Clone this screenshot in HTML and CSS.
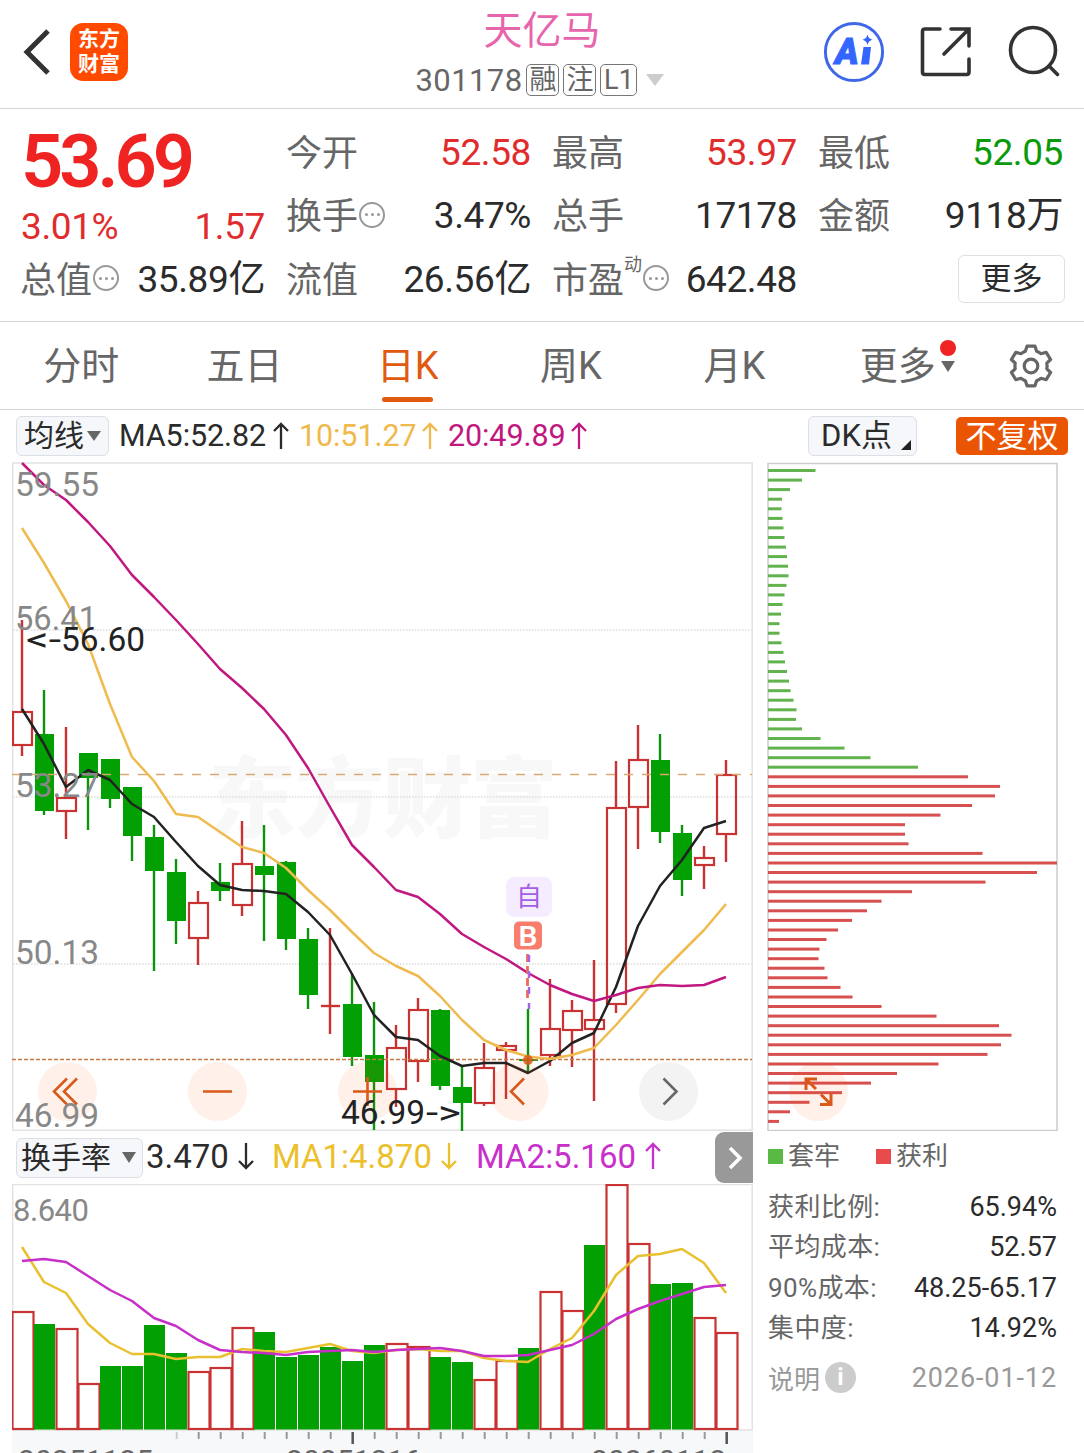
FILE: index.html
```html
<!DOCTYPE html>
<html lang="zh-CN">
<head>
    <meta charset="UTF-8">
    <meta name="viewport" content="width=device-width, initial-scale=1.0">
    <title>天亿马 301178</title>
    <link rel="stylesheet" href="styles.css">
</head>
<body>

    <!-- 顶部导航 -->
    <header class="top-bar">
        <div class="top-left">
            <svg class="back" width="28" height="48" viewBox="0 0 28 48"><path d="M26 3L5 24L26 45"/></svg>
            <div class="logo"><span>东方</span><span>财富</span></div>
        </div>
        <div class="top-title">
            <h1>天亿马</h1>
            <div class="code-row">
                <span class="code">301178</span>
                <span class="tag">融</span>
                <span class="tag">注</span>
                <span class="tag tag-l1">L1</span>
                <i class="caret"></i>
            </div>
        </div>
        <div class="top-right">
            <svg width="62" height="62" viewBox="0 0 62 62">
                <circle cx="31" cy="31" r="28.600" fill="none" stroke="#3f68e8" stroke-width="3"/>
                <text class="ai-text" x="12" y="43">A</text>
                <path d="M40.500 26h7.500l-2 17.500h-8z" fill="#3366ff"/>
                <path d="M44.500 13.500q1 4.500 5 5.200q-4 .8-5 5.300q-1-4.500-5-5.300q4-.7 5-5.200z" fill="#3366ff"/>
            </svg>
            <svg class="line-icon" width="52" height="52" viewBox="0 0 52 52">
                <path d="M20 3H5Q2.500 3 2.500 5.500V46Q2.500 48.500 5 48.500H46.500Q49 48.500 49 46V33M31 3H49V20M48 4L24 28"/>
            </svg>
            <svg class="line-icon" width="54" height="54" viewBox="0 0 54 54">
                <circle cx="26" cy="25" r="22.500"/><path d="M42 41L50.500 49.500"/>
            </svg>
        </div>
    </header>

    <!-- 行情数据 -->
    <section class="quote">
        <div class="quote-main">
            <div class="price">53.69</div>
            <div class="item red"><span>3.01%</span><span>1.57</span></div>
        </div>
        <div class="item"><label>今开</label><b class="red">52.58</b></div>
        <div class="item"><label>最高</label><b class="red">53.97</b></div>
        <div class="item"><label>最低</label><b class="green">52.05</b></div>
        <div class="item"><label>换手<i class="dots"></i></label><b>3.47%</b></div>
        <div class="item"><label>总手</label><b>17178</b></div>
        <div class="item"><label>金额</label><b>9118万</b></div>
        <div class="item"><label>总值<i class="dots"></i></label><b>35.89亿</b></div>
        <div class="item"><label>流值</label><b>26.56亿</b></div>
        <div class="item"><label>市盈<sup>动</sup><i class="dots"></i></label><b>642.48</b></div>
        <button class="more-btn">更多</button>
    </section>

    <!-- 周期切换 -->
    <nav class="tabs">
        <a>分时</a>
        <a>五日</a>
        <a class="active">日K</a>
        <a>周K</a>
        <a>月K</a>
        <a class="tab-more">更多<i class="red-dot"></i><i class="small-caret"></i></a>
        <svg class="gear" width="46" height="46" viewBox="-23 -23 46 46">
            <path d="M-4 -19.800H4L5.600 -14.800Q8.200 -13.700 10 -12.300L15.200 -13.700L19.600 -6.500L15.800 -2.800Q16.300 0 15.800 2.800L19.600 6.500L15.200 13.700L10 12.300Q8.200 13.700 5.600 14.800L4 19.800H-4L-5.600 14.800Q-8.200 13.700 -10 12.300L-15.200 13.700L-19.600 6.500L-15.800 2.800Q-16.300 0 -15.800 -2.800L-19.600 -6.500L-15.200 -13.700L-10 -12.300Q-8.200 -13.700 -5.600 -14.800Z"/>
            <circle r="6.800"/>
        </svg>
    </nav>

    <!-- 均线 -->
    <div class="ma-bar">
        <button class="select-btn">均线<i class="small-caret"></i></button>
        <span class="ma ma5">MA5:52.82<svg class="arrow" viewBox="0 0 18 28"><path d="M9 27V2M2 9L9 2L16 9"/></svg></span>
        <span class="ma ma10">10:51.27<svg class="arrow" viewBox="0 0 18 28"><path d="M9 27V2M2 9L9 2L16 9"/></svg></span>
        <span class="ma ma20">20:49.89<svg class="arrow" viewBox="0 0 18 28"><path d="M9 27V2M2 9L9 2L16 9"/></svg></span>
        <button class="select-btn dk-btn">DK点<i class="corner"></i></button>
        <button class="fq-btn">不复权</button>
    </div>

    <main class="charts">
        <div class="left">
            <svg id="kline" width="741" height="669" viewBox="12 462 741 669"></svg>
            <div class="ind-bar">
                <button class="select-btn">换手率<i class="small-caret"></i></button>
                <span class="ind">3.470<svg class="arrow" viewBox="0 0 18 28"><path d="M9 1V26M2 19L9 26L16 19"/></svg></span>
                <span class="ind ind-ma1">MA1:4.870<svg class="arrow" viewBox="0 0 18 28"><path d="M9 1V26M2 19L9 26L16 19"/></svg></span>
                <span class="ind ind-ma2">MA2:5.160<svg class="arrow" viewBox="0 0 18 28"><path d="M9 27V2M2 9L9 2L16 9"/></svg></span>
                <button class="next-btn"><svg width="16" height="26" viewBox="0 0 16 26"><path d="M3 3L13 13L3 23"/></svg></button>
            </div>
            <svg id="volume" width="741" height="269" viewBox="12 1184 741 269"></svg>
        </div>

        <!-- 筹码分布 -->
        <aside class="right">
            <svg id="chips" width="292" height="669" viewBox="767 462 292 669"></svg>
            <div class="legend">
                <span><i class="box box-green"></i>套牢</span>
                <span><i class="box box-red"></i>获利</span>
            </div>
            <dl class="stats">
                <dt>获利比例:</dt><dd>65.94%</dd>
                <dt>平均成本:</dt><dd>52.57</dd>
                <dt>90%成本:</dt><dd>48.25-65.17</dd>
                <dt>集中度:</dt><dd>14.92%</dd>
            </dl>
            <div class="note">
                <span>说明<i class="info">i</i></span>
                <span class="date">2026-01-12</span>
            </div>
        </aside>
    </main>

    <script src="script.js"></script>
</body>
</html>
```
FILE: styles.css
```css
* {
    box-sizing: border-box;
}

body {
    margin: 0;
    width: 1084px;
    height: 1453px;
    overflow: hidden;
    background: #fff;
    color: #2b2b2b;
    font-family: Roboto, "Noto Sans CJK SC", sans-serif;
}

button {
    font-family: inherit;
    padding: 0;
    color: inherit;
}

i {
    font-style: normal;
}

.red { color: #e02c2c; }
.green { color: #0c9a0c; }

/* 顶部导航 */
.top-bar {
    display: grid;
    grid-template-columns: 1fr 260px 1fr;
    height: 109px;
    border-bottom: 1px solid #d6d6d6;
}

.top-left {
    display: flex;
    align-items: center;
    height: 103px;
    padding-left: 22px;
    gap: 20px;
}

.back path {
    fill: none;
    stroke: #333;
    stroke-width: 5;
}

.logo {
    display: flex;
    flex-direction: column;
    align-items: center;
    justify-content: center;
    width: 58px;
    height: 58px;
    border-radius: 13px;
    background: #ff4a00;
    color: #fff;
    font-size: 21px;
    font-weight: 700;
    line-height: 25px;
}

.top-title {
    text-align: center;
}

.top-title h1 {
    margin: 0;
    padding-top: 3px;
    font-size: 39px;
    font-weight: 400;
    line-height: 56px;
    color: #e765ac;
}

.code-row {
    display: flex;
    align-items: center;
    justify-content: center;
    height: 42px;
    margin-left: -4px;
    gap: 4px;
    color: #666;
}

.code {
    font-size: 31px;
    letter-spacing: 0.4px;
}

.tag {
    width: 33px;
    height: 32px;
    border: 1px solid #777;
    border-radius: 5px;
    font-size: 27px;
    line-height: 30px;
    text-align: center;
}

.tag-l1 {
    width: 37px;
}

.caret {
    margin-left: 5px;
    border: 9px solid transparent;
    border-top: 12px solid #ccc;
    border-bottom: 0;
}

.top-right {
    display: flex;
    align-items: center;
    justify-content: flex-end;
    height: 103px;
    padding-right: 23px;
    gap: 35px;
}

.ai-text {
    font: italic 900 36px Roboto, sans-serif;
    fill: #3366ff;
    stroke: #3366ff;
    stroke-width: 1;
}

.line-icon {
    fill: none;
    stroke: #333;
    stroke-width: 3.6;
    stroke-linecap: round;
}

/* 行情 */
.quote {
    display: grid;
    grid-template-columns: repeat(4, 244px);
    grid-template-rows: 63.5px 63.5px 63.5px;
    column-gap: 22px;
    height: 213px;
    padding: 12px 21px 0;
    border-bottom: 1px solid #d6d6d6;
}

.quote-main {
    grid-row: span 2;
}

.price {
    height: 80px;
    font-size: 74px;
    font-weight: 600;
    line-height: 82px;
    letter-spacing: -4px;
    color: #f02323;
}

.quote-main .item {
    height: 50px;
}

.item {
    display: flex;
    align-items: center;
    justify-content: space-between;
    font-size: 37px;
    letter-spacing: -0.4px;
    white-space: nowrap;
}

.item label {
    display: flex;
    align-items: center;
    margin: 2px 0 0 -1px;
    font-size: 36px;
    letter-spacing: 0;
    line-height: 50px;
    color: #666;
}

.item b {
    font-weight: 400;
    line-height: 50px;
}

.item sup {
    align-self: flex-start;
    font-size: 18px;
    line-height: 18px;
}

.dots {
    display: flex;
    align-items: center;
    justify-content: center;
    width: 26px;
    height: 26px;
    border: 2px solid #999;
    border-radius: 50%;
    margin: -5px 1px 0;
}

.dots::before {
    content: "";
    width: 3px;
    height: 3px;
    border-radius: 50%;
    background: #999;
    box-shadow: -6px 0 #999, 6px 0 #999;
}

.more-btn {
    align-self: center;
    justify-self: end;
    width: 107px;
    height: 48px;
    margin: -2px -2px 0 0;
    border: 1.5px solid #e0e0e0;
    border-radius: 6px;
    background: #fff;
    font-size: 31px;
    line-height: 44px;
}

/* 周期 */
.tabs {
    display: flex;
    align-items: center;
    height: 88px;
    border-bottom: 1px solid #d6d6d6;
}

.tabs a {
    position: relative;
    width: 163.3px;
    padding-right: 1px;
    font-size: 38px;
    line-height: 92px;
    text-align: center;
    color: #666;
}

.tabs .active {
    color: #e05a12;
}

.tabs .active::after {
    content: "";
    position: absolute;
    left: 55px;
    bottom: 10px;
    width: 51px;
    height: 5px;
    border-radius: 3px;
    background: #e05a12;
}

.small-caret {
    border: 7px solid transparent;
    border-top: 11px solid #666;
    border-bottom: 0;
}

.tab-more .small-caret {
    position: absolute;
    right: 25px;
    top: 41px;
}

.red-dot {
    position: absolute;
    right: 24px;
    top: 20px;
    width: 16px;
    height: 16px;
    border-radius: 50%;
    background: #f02323;
}

.gear {
    margin-left: 28px;
    fill: none;
    stroke: #666;
    stroke-width: 3.2;
    stroke-linejoin: round;
}

/* 均线栏 */
.ma-bar {
    display: flex;
    align-items: center;
    height: 52px;
    padding: 0 16px;
}

.select-btn {
    display: flex;
    align-items: center;
    justify-content: center;
    gap: 3px;
    width: 93px;
    height: 40px;
    border: 1px solid #dcdfe3;
    border-radius: 6px;
    background: #f5f7fa;
    font-size: 30px;
    line-height: 38px;
}

.ma-bar .select-btn .small-caret {
    border-top-width: 10px;
}

.ma {
    display: flex;
    align-items: center;
    font-size: 30.5px;
    line-height: 40px;
    letter-spacing: -0.1px;
}

.arrow {
    width: 18px;
    height: 28px;
    margin-top: -1px;
    fill: none;
    stroke: currentColor;
    stroke-width: 2.3;
}

.ma5 {
    width: 180px;
    margin-left: 10px;
    gap: 6px;
}

.ma10 {
    width: 149px;
    gap: 5px;
    color: #f0b94c;
}

.ma20 {
    gap: 5px;
    color: #c01880;
}

.dk-btn {
    position: relative;
    width: 109px;
    margin-left: auto;
    padding-right: 12px;
    font-size: 31px;
}

.corner {
    position: absolute;
    right: 5px;
    bottom: 5px;
    border-left: 10px solid transparent;
    border-bottom: 10px solid #222;
}

.fq-btn {
    width: 112px;
    height: 38px;
    margin-left: 39px;
    border: 0;
    border-radius: 5px;
    background: #ea5504;
    color: #fff;
    font-size: 31px;
    line-height: 37px;
}

/* 图表 */
.charts {
    display: flex;
    gap: 14px;
    padding-left: 12px;
}

.charts > div > svg,
.charts > aside > svg {
    display: block;
}

.left {
    width: 741px;
}

.ind-bar {
    display: flex;
    align-items: center;
    height: 53px;
    padding-left: 4px;
}

.ind-bar .select-btn {
    width: 127px;
    padding-right: 2px;
    gap: 11px;
}

.ind {
    display: flex;
    align-items: center;
    gap: 8px;
    margin: -2px 0 0 3px;
    font-size: 33px;
}

.ind-ma1 {
    margin-left: 17px;
    color: #ebc02c;
}

.ind-ma2 {
    margin-left: 18px;
    color: #c92fcb;
}

.next-btn {
    width: 38px;
    height: 51px;
    margin-left: auto;
    border: 0;
    border-radius: 9px 0 0 9px;
    background: #999;
}

.next-btn svg {
    margin: 4px 0 0 2px;
}

.next-btn path {
    fill: none;
    stroke: #fff;
    stroke-width: 3.6;
}

.grid { stroke: #dcdcdc; stroke-width: 1.4; stroke-dasharray: 1.5 1.5; }
.frame { fill: none; stroke: #e2e2e2; stroke-width: 1.5; }
.up { fill: #fff; stroke: #c93232; stroke-width: 2.2; }
.down { fill: #02a002; }
.wick-up { stroke: #c93232; stroke-width: 2.4; }
.wick-down { stroke: #0c920c; stroke-width: 2.4; }
.line { fill: none; stroke-width: 2.5; stroke-linejoin: round; }
.axis-text { font-size: 33px; fill: #888; }
.mark-text { font-size: 33px; fill: #222; }
.watermark { font-size: 88px; font-weight: 900; fill: #f8f8f8; }
.tool { fill: #ff5a14; fill-opacity: 0.09; }
.tool-gray { fill: #f3f3f3; }
.tool-line { fill: none; stroke: #d9591a; stroke-width: 2.6; }
.tool-line-gray { stroke: #666; }

/* 右侧筹码 */
.legend {
    display: flex;
    gap: 36px;
    height: 50px;
    padding-left: 1px;
    font-size: 26px;
    line-height: 50px;
    color: #666;
}

.legend span {
    display: flex;
    align-items: center;
}

.box {
    width: 15px;
    height: 15px;
    margin-right: 5px;
}

.box-green { background: #58b944; }
.box-red { background: #e84b4b; }

.stats {
    display: grid;
    grid-template-columns: auto 1fr;
    grid-auto-rows: 40.4px;
    width: 290px;
    margin: 6px 0 0;
    padding-left: 1px;
    font-size: 26px;
    line-height: 41px;
}

.stats dt {
    letter-spacing: 0.4px;
    color: #666;
}

.stats dd {
    margin: 0;
    text-align: right;
    font-size: 27px;
}

.note {
    display: flex;
    align-items: center;
    justify-content: space-between;
    width: 290px;
    height: 58px;
    padding-left: 1px;
    font-size: 26px;
    color: #999;
}

.note span {
    display: flex;
    align-items: center;
}

.note .date {
    font-size: 27px;
    letter-spacing: 0.9px;
}

.info {
    width: 31px;
    height: 31px;
    margin-left: 5px;
    border-radius: 50%;
    background: #ccc;
    color: #fff;
    font-size: 24px;
    font-weight: 700;
    line-height: 31px;
    text-align: center;
}
```
FILE: script.js
```javascript
// 每根K线: [涨跌, 最高, 实体上, 实体下, 最低]
const candles = [
    ['r', 620, 712, 745, 756], ['g', 690, 734, 811, 815], ['r', 727, 798, 811, 839],
    ['g', 753, 753, 778, 830], ['g', 759, 759, 799, 808], ['g', 787, 787, 836, 861],
    ['g', 825, 837, 871, 971], ['g', 859, 872, 921, 944], ['r', 891, 903, 938, 965],
    ['g', 863, 882, 891, 901], ['r', 821, 864, 905, 916], ['g', 825, 866, 875, 941],
    ['g', 861, 862, 939, 950], ['g', 928, 939, 995, 1009], ['r', 928, 1006, 1006, 1034],
    ['g', 974, 1004, 1057, 1066], ['g', 1002, 1055, 1082, 1130], ['r', 1025, 1048, 1089, 1107],
    ['r', 998, 1010, 1061, 1082], ['g', 1009, 1010, 1086, 1090], ['g', 1065, 1087, 1103, 1131],
    ['r', 1043, 1068, 1103, 1106], ['r', 1042, 1046, 1050, 1099], ['g', 1009, 1060, 1060, 1073],
    ['r', 979, 1029, 1055, 1066], ['r', 1000, 1011, 1030, 1067], ['r', 960, 1020, 1029, 1101],
    ['r', 761, 808, 1004, 1013], ['r', 725, 760, 807, 849], ['g', 734, 760, 832, 843],
    ['g', 825, 833, 880, 896], ['r', 846, 858, 865, 889], ['r', 760, 775, 834, 862]
];
const ma5 = [709, 744, 787, 770, 780, 804, 817, 842, 866, 885, 890, 891, 894, 912, 935, 974, 1015, 1037, 1040, 1056, 1066, 1063, 1063, 1073, 1061, 1043, 1033, 987, 926, 886, 860, 828, 821];
const ma10 = [528, 563, 601, 644, 704, 757, 781, 814, 817, 832, 847, 853, 868, 890, 910, 932, 953, 966, 976, 996, 1020, 1040, 1050, 1056.5, 1059, 1055, 1048, 1025, 1000, 974, 952, 930, 904];
const ma20 = [463, 485, 500, 522, 546, 575, 597, 620, 644, 669, 688, 709, 735, 768, 807, 845, 867, 890, 897, 914, 934, 947, 959, 973, 985, 994, 1001, 995, 988, 985, 986, 985, 977];

const volumes = [
    'r1312', 'g1324', 'r1329', 'r1384', 'g1366', 'g1366', 'g1325', 'g1353', 'r1372', 'r1368', 'r1328',
    'g1332', 'g1357', 'g1355', 'g1347', 'g1361', 'g1345', 'r1344', 'r1347', 'g1357', 'g1362', 'r1380',
    'r1361', 'g1348', 'r1292', 'r1311', 'g1245', 'r1185', 'r1244', 'g1284', 'g1283', 'r1318', 'r1333'
];
const volMa1 = [1247, 1282, 1293, 1324, 1343, 1354, 1354, 1359, 1357, 1357, 1349, 1351, 1352, 1348, 1344, 1351, 1353, 1350, 1349, 1351, 1351, 1358, 1361, 1362, 1349, 1338, 1311, 1275, 1256, 1254, 1249, 1263, 1293];
const volMa2 = [1261, 1259, 1262, 1276, 1290, 1301, 1318, 1326, 1340, 1350, 1352, 1353, 1355, 1352, 1351, 1350, 1352, 1350, 1349, 1348, 1351, 1356, 1356, 1355, 1350, 1345, 1334, 1319, 1309, 1301, 1294, 1287, 1285];

// 筹码: 前32条为套牢盘, 其余为获利盘
const chips = [47.5, 34, 22, 14, 13.5, 14.5, 15.5, 16.5, 18, 19, 20, 20.5, 18.5, 16.5, 14.5, 13, 11.5, 11.5, 13.5, 15.5, 17, 19, 21, 22.5, 25.5, 28.5, 28, 34, 52.5, 76.5, 102.5, 150,
    200, 232, 227, 204, 172.5, 137, 137, 140.5, 214.5, 289, 269, 217.5, 144, 113.5, 99, 84, 70, 58.5, 51.5, 50.5, 56.5, 59.5, 72.5, 84.5, 113.5, 168.5, 231, 243.5, 233, 219.5, 170.5, 129, 103, 74, 41.5, 22, 11];

const px = i => 22 + i * 22;

function line(values, color) {
    const pts = values.map((y, i) => px(i) + ',' + y).join(' ');
    return `<polyline class="line" stroke="${color}" points="${pts}"/>`;
}

function label(cls, x, y, w, text) {
    return `<text class="${cls}" x="${x}" y="${y}" textLength="${w}" lengthAdjust="spacingAndGlyphs">${text}</text>`;
}

// K线图
let k = '<text class="watermark" x="208" y="830" textLength="350">东方财富</text>';
[630, 797, 964].forEach(y => k += `<path class="grid" d="M13 ${y}H752"/>`);
k += '<rect class="frame" x="12.700" y="463" width="739.500" height="667.200"/>';
candles.forEach(([t, hi, top, bot, lo], i) => {
    const x = px(i);
    if (t === 'r') {
        k += `<path class="wick-up" d="M${x} ${hi}V${top}M${x} ${bot}V${lo}"/>`;
        k += top === bot
            ? `<path class="wick-up" d="M${x - 9} ${top}H${x + 10}"/>`
            : `<rect class="up" fill-opacity="0" x="${x - 9}" y="${top}" width="19" height="${bot - top}"/>`;
    } else {
        k += `<path class="wick-down" d="M${x} ${hi}V${lo}"/>`;
        k += `<rect class="down" x="${x - 9}" y="${top - (top === bot ? 1 : 0)}" width="19" height="${Math.max(bot - top, 2)}"/>`;
    }
});
k += '<path d="M12 774.500H752" stroke="#d8aa72" stroke-width="1.300" stroke-dasharray="9 9"/>';
k += '<path d="M12 1059.500H752" stroke="#c47a45" stroke-width="1.300" stroke-dasharray="4 2"/>';
k += line(ma5, '#222') + line(ma10, '#efbb4f') + line(ma20, '#c01880');

// 买点标记
k += '<path d="M527.500 954V1000" stroke="#ef6a5e" stroke-width="2.800" stroke-dasharray="8 4"/>';
k += '<path d="M529 955V1009" stroke="#a463e8" stroke-width="2.500" stroke-dasharray="7 9"/>';
k += '<rect x="506" y="877" width="46" height="40" rx="8" fill="#f5edff"/><text x="516" y="906" font-size="26" fill="#a35fe3">自</text>';
k += '<rect x="514" y="921.500" width="28" height="28" rx="5" fill="#f87d6c"/><text x="518.500" y="945.500" font-size="28" font-weight="600" fill="#fff" textLength="19" lengthAdjust="spacingAndGlyphs">B</text>';
k += '<circle cx="528" cy="1060" r="5" fill="#d9591a" fill-opacity="0.85"/>';

// 底部圆形按钮
[67.5, 217.5, 367.5, 519].forEach(x => k += `<circle class="tool" cx="${x}" cy="1091.500" r="29.500"/>`);
k += '<circle class="tool-gray" cx="668.500" cy="1091.500" r="29.500"/>';
k += '<path class="tool-line" d="M67 1078.500L54 1091.500L67 1104.500M77 1078.500L64 1091.500L77 1104.500"/>';
k += '<path class="tool-line" d="M203 1091.500H232M353 1091.500H382M367.500 1077V1106"/>';
k += '<path class="tool-line" d="M524 1078.500L511 1091.500L524 1104.500"/>';
k += '<path class="tool-line tool-line-gray" d="M663.500 1078.500L676.500 1091.500L663.500 1104.500"/>';

k += label('axis-text', 15, 496, 84, '59.55') + label('axis-text', 15, 630, 82, '56.41') + label('axis-text', 15, 797, 84, '53.27');
k += label('axis-text', 15, 964, 84, '50.13') + label('axis-text', 15, 1126.5, 84, '46.99');
// 箭头拉宽, 数值保持正常字距
k += label('mark-text', 26, 651, 35, '&lt;-') + label('mark-text', 61, 651, 84, '56.60');
k += label('mark-text', 341, 1123.5, 84, '46.99') + label('mark-text', 426, 1123.5, 35, '-&gt;');
document.getElementById('kline').innerHTML = k;

// 换手率
let v = '<rect x="12" y="1430" width="741" height="23" fill="#f7f8fa"/>';
v += '<rect class="frame" x="12.700" y="1184.500" width="739.500" height="245.500"/>';
volumes.forEach((s, i) => {
    const x = px(i), y = +s.slice(1);
    v += s[0] === 'r'
        ? `<rect class="up" x="${x - 9.5}" y="${y}" width="21" height="${1429 - y}"/>`
        : `<rect class="down" x="${x - 10}" y="${y}" width="21" height="${1429.5 - y}"/>`;
    if (i > 6) {
        const big = i === 15 || i === 32;
        v += `<path d="M${x + 0.7} 1432V${big ? 1444 : 1439}" stroke="${big ? '#555' : i === 7 ? '#ccc' : '#999'}" stroke-width="${big ? 2.5 : 2}"/>`;
    }
});
v += line(volMa1, '#e9c02f') + line(volMa2, '#c62fc9');
v += '<text class="axis-text" style="font-size:31px" x="13" y="1221" textLength="76">8.640</text>';
v += '<g font-size="30" fill="#666"><text x="18" y="1471" textLength="135">20251125</text><text x="286" y="1471" textLength="135">20251216</text><text x="591" y="1471" textLength="135">20260112</text></g>';
document.getElementById('volume').innerHTML = v;

// 筹码分布
let c = '<rect x="768" y="463.500" width="289" height="667" fill="none" stroke="#ccc" stroke-width="1.500"/>';
chips.forEach((w, i) => {
    c += `<rect x="768" y="${(469 + i * 9.572).toFixed(1)}" width="${w}" height="3" fill="${i < 32 ? '#62b24e' : '#d84f4f'}"/>`;
});
c += '<circle class="tool" cx="818.500" cy="1091.500" r="29.500"/>';
c += '<path class="tool-line" style="stroke-width:3" d="M817 1079H806V1090M806 1079L816 1089M820 1104.500H831V1093.500M831 1104.500L821 1094.500"/>';
document.getElementById('chips').innerHTML = c;
```
